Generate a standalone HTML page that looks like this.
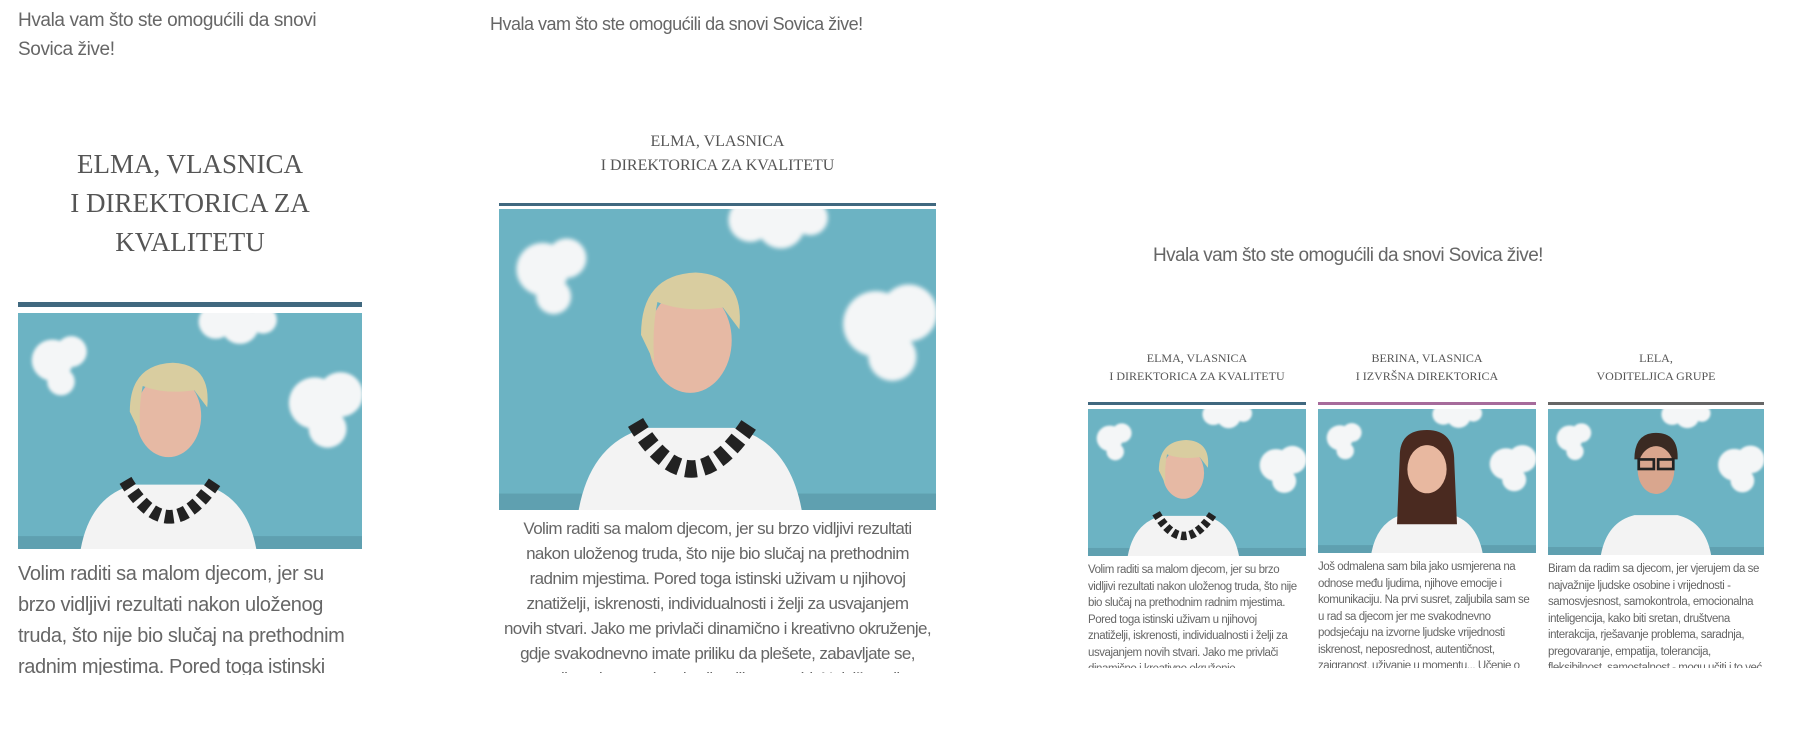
<!DOCTYPE html>
<html><head><meta charset="utf-8">
<style>
*{margin:0;padding:0;box-sizing:border-box}
body{width:1807px;height:733px;background:#fff;position:relative;overflow:hidden;color:#666;font-family:"Liberation Sans",sans-serif}
.a{position:absolute}
.h{font-family:"Liberation Serif",serif;color:#555;text-align:center;font-weight:normal}
.txt{overflow:hidden}
.nw{white-space:nowrap}
svg{display:block}
</style></head><body>
<svg width="0" height="0" style="position:absolute">
<defs>
<filter id="bl"><feGaussianBlur stdDeviation="2"/></filter>
<g id="bg">
<rect width="400" height="300" fill="#6cb3c3"/>
<rect y="260" width="400" height="40" fill="#5fa0b0"/>
<g fill="#f4f6f7" filter="url(#bl)">
<circle cx="40" cy="55" r="24"/><circle cx="62" cy="45" r="18"/><circle cx="50" cy="80" r="16"/>
<circle cx="230" cy="10" r="20"/><circle cx="258" cy="14" r="22"/><circle cx="285" cy="8" r="16"/>
<circle cx="345" cy="105" r="30"/><circle cx="375" cy="95" r="26"/><circle cx="360" cy="135" r="22"/>
</g>
</g>
<g id="p1">
<use href="#bg"/>
<path d="M70 300 Q75 215 135 200 L215 200 Q275 215 280 300Z" fill="#f3f3f3"/>
<ellipse cx="175" cy="120" rx="38" ry="48" fill="#e6b9a4"/>
<path d="M130 115 Q130 60 180 58 Q225 60 220 110 L205 90 Q170 95 145 85 Q140 110 142 140Z" fill="#d9cda0"/>
<path d="M125 195 Q175 280 230 195" fill="none" stroke="#222" stroke-width="16" stroke-dasharray="10 6"/>
</g>
<g id="p2">
<use href="#bg"/>
<path d="M95 300 Q100 215 160 200 L240 200 Q300 215 305 300Z" fill="#f3f3f3"/>
<path d="M150 90 Q150 40 200 40 Q250 40 250 100 L255 220 L145 220Z" fill="#4a2a20"/>
<ellipse cx="200" cy="115" rx="36" ry="46" fill="#e8b8a0"/>
</g>
<g id="p3">
<use href="#bg"/>
<path d="M95 300 Q100 215 160 200 L240 200 Q300 215 305 300Z" fill="#f3f3f3"/>
<path d="M160 95 Q160 45 200 45 Q242 45 240 95Z" fill="#3a2a22"/>
<ellipse cx="200" cy="115" rx="34" ry="45" fill="#d9a68e"/>
<rect x="168" y="95" width="28" height="18" fill="none" stroke="#222" stroke-width="5"/><rect x="204" y="95" width="28" height="18" fill="none" stroke="#222" stroke-width="5"/>
</g>
</defs></svg>

<!-- Panel 1 -->
<div class="a" style="left:18px;top:6px;width:330px;font-size:19px;line-height:29px;letter-spacing:-0.4px">Hvala vam što ste omogućili da snovi Sovica žive!</div>
<div class="a h" style="left:18px;top:145px;width:344px;font-size:27px;line-height:39px">ELMA, VLASNICA<br>I DIREKTORICA ZA<br>KVALITETU</div>
<div class="a" style="left:18px;top:302px;width:344px;height:5px;background:#40687f"></div>
<div class="a" style="left:18px;top:313px;width:344px;height:236px"><svg width="344" height="236" viewBox="0 0 400 275" preserveAspectRatio="none"><use href="#p1"/></svg></div>
<div class="a txt" style="left:18px;top:559px;width:344px;height:116px;font-size:20px;line-height:31px;letter-spacing:-0.4px">Volim raditi sa malom djecom, jer su brzo vidljivi rezultati nakon uloženog truda, što nije bio slučaj na prethodnim radnim mjestima. Pored toga istinski uživam u njihovoj</div>

<!-- Panel 2 -->
<div class="a" style="left:490px;top:12px;font-size:18px;line-height:24px;letter-spacing:-0.5px">Hvala vam što ste omogućili da snovi Sovica žive!</div>
<div class="a h" style="left:499px;top:130px;width:437px;font-size:16px;line-height:24px">ELMA, VLASNICA<br>I DIREKTORICA ZA KVALITETU</div>
<div class="a" style="left:499px;top:203px;width:437px;height:3px;background:#40687f"></div>
<div class="a" style="left:499px;top:209px;width:437px;height:301px"><svg width="437" height="301" viewBox="0 0 400 275" preserveAspectRatio="none"><use href="#p1"/></svg></div>
<div class="a txt nw" style="left:479px;top:516px;width:477px;height:157px;font-size:17px;line-height:25px;text-align:center;letter-spacing:-0.6px">Volim raditi sa malom djecom, jer su brzo vidljivi rezultati<br>nakon uloženog truda, što nije bio slučaj na prethodnim<br>radnim mjestima. Pored toga istinski uživam u njihovoj<br>znatiželji, iskrenosti, individualnosti i želji za usvajanjem<br>novih stvari. Jako me privlači dinamično i kreativno okruženje,<br>gdje svakodnevno imate priliku da plešete, zabavljate se,<br>nasmijete do suza i probudite dijete u sebi. Najviše volim</div>

<!-- Panel 3 -->
<div class="a" style="left:1153px;top:244px;font-size:19px;line-height:24px;letter-spacing:-0.6px">Hvala vam što ste omogućili da snovi Sovica žive!</div>

<div class="a h" style="left:1088px;top:349px;width:218px;font-size:12px;line-height:18px">ELMA, VLASNICA<br>I DIREKTORICA ZA KVALITETU</div>
<div class="a" style="left:1088px;top:402px;width:218px;height:3px;background:#40687f"></div>
<div class="a" style="left:1088px;top:409px;width:218px;height:147px"><svg width="218" height="147" viewBox="0 0 400 275" preserveAspectRatio="none"><use href="#p1"/></svg></div>
<div class="a txt nw" style="left:1088px;top:562px;width:225px;height:106px;font-size:11.5px;line-height:16.5px;letter-spacing:-0.45px">Volim raditi sa malom djecom, jer su brzo<br>vidljivi rezultati nakon uloženog truda, što nije<br>bio slučaj na prethodnim radnim mjestima.<br>Pored toga istinski uživam u njihovoj<br>znatiželji, iskrenosti, individualnosti i želji za<br>usvajanjem novih stvari. Jako me privlači<br>dinamično i kreativno okruženje</div>

<div class="a h" style="left:1318px;top:349px;width:218px;font-size:12px;line-height:18px">BERINA, VLASNICA<br>I IZVRŠNA DIREKTORICA</div>
<div class="a" style="left:1318px;top:402px;width:218px;height:3px;background:#a66b9b"></div>
<div class="a" style="left:1318px;top:409px;width:218px;height:144px"><svg width="218" height="144" viewBox="0 0 400 275" preserveAspectRatio="none"><use href="#p2"/></svg></div>
<div class="a txt nw" style="left:1318px;top:559px;width:225px;height:109px;font-size:11.5px;line-height:16.5px;letter-spacing:-0.45px">Još odmalena sam bila jako usmjerena na<br>odnose među ljudima, njihove emocije i<br>komunikaciju. Na prvi susret, zaljubila sam se<br>u rad sa djecom jer me svakodnevno<br>podsjećaju na izvorne ljudske vrijednosti<br>iskrenost, neposrednost, autentičnost,<br>zaigranost, uživanje u momentu... Učenje o</div>

<div class="a h" style="left:1548px;top:349px;width:216px;font-size:12px;line-height:18px">LELA,<br>VODITELJICA GRUPE</div>
<div class="a" style="left:1548px;top:402px;width:216px;height:3px;background:#666"></div>
<div class="a" style="left:1548px;top:409px;width:216px;height:146px"><svg width="216" height="146" viewBox="0 0 400 275" preserveAspectRatio="none"><use href="#p3"/></svg></div>
<div class="a txt nw" style="left:1548px;top:561px;width:222px;height:107px;font-size:11.5px;line-height:16.5px;letter-spacing:-0.45px">Biram da radim sa djecom, jer vjerujem da se<br>najvažnije ljudske osobine i vrijednosti -<br>samosvjesnost, samokontrola, emocionalna<br>inteligencija, kako biti sretan, društvena<br>interakcija, rješavanje problema, saradnja,<br>pregovaranje, empatija, tolerancija,<br>fleksibilnost, samostalnost - mogu učiti i to već</div>
</body></html>
